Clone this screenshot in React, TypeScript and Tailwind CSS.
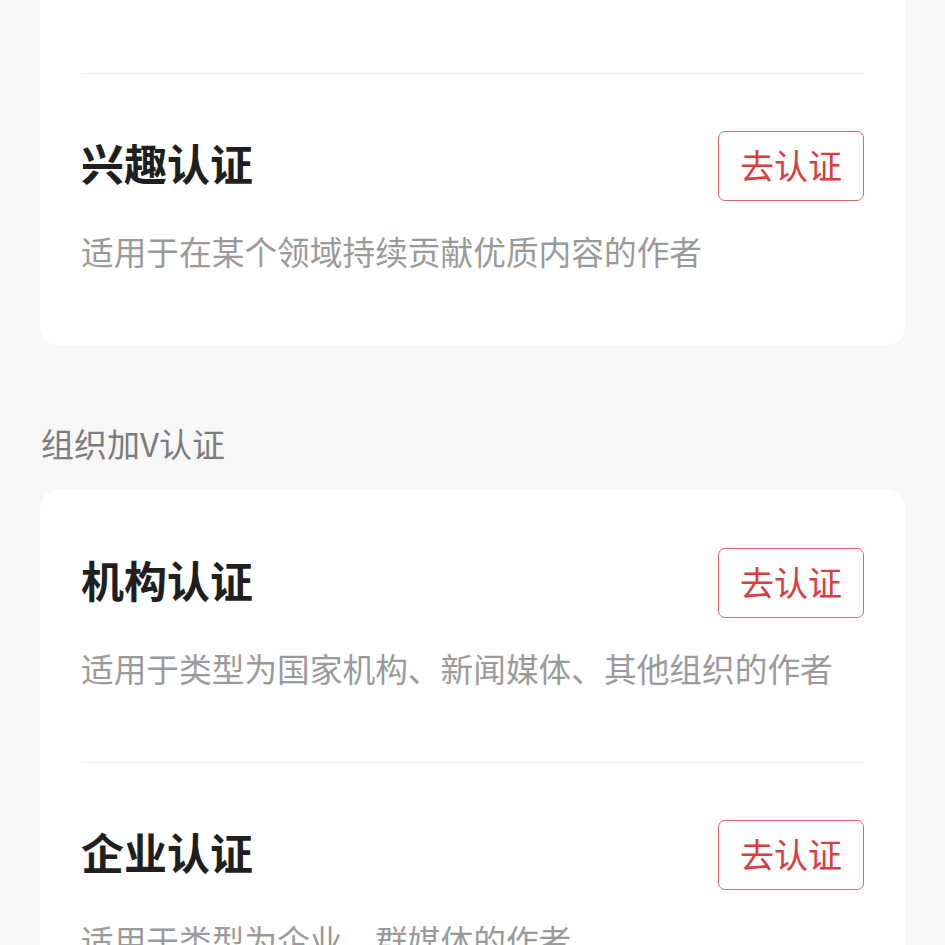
import React from "react";

const font = { fontFamily: '"Noto Sans CJK SC", "Noto Sans", sans-serif' };

function Item({ title, desc, divider }: { title: string; desc: string; divider?: boolean }) {
  return (
    <div className={divider ? "border-t border-[#eeeeee]" : ""}>
      <div className={divider ? "pt-[57px] pb-[72px]" : "pt-[58px] pb-[72px]"}>
        <div className="flex items-center justify-between h-[70px]">
          <div className="text-[43px] font-bold text-[#1f1f1f] leading-none mb-[8px]">{title}</div>
          <button className="w-[146px] h-[70px] border border-[#e06666] rounded-[7px] text-[34px] text-[#dc3c3c] leading-none flex items-center justify-center pb-[3px]">
            去认证
          </button>
        </div>
        <div className="mt-[28px] text-[32.7px] leading-[44px] text-[#9a9a9a]">{desc}</div>
      </div>
    </div>
  );
}

export default function App() {
  return (
    <div className="min-h-[945px] bg-[#f7f7f7] px-[40px] overflow-hidden" style={font}>
      <div className="bg-white rounded-b-[18px] px-[41px]">
        <div className="h-[73px]" />
        <Item title="兴趣认证" desc="适用于在某个领域持续贡献优质内容的作者" divider />
      </div>
      <div className="pt-[76px] pb-[25px] text-[33px] leading-[44px] text-[#7c7c7c] px-[1px]">组织加V认证</div>
      <div className="bg-white rounded-[18px] px-[41px]">
        <Item title="机构认证" desc="适用于类型为国家机构、新闻媒体、其他组织的作者" />
        <Item title="企业认证" desc="适用于类型为企业、群媒体的作者" divider />
      </div>
    </div>
  );
}
